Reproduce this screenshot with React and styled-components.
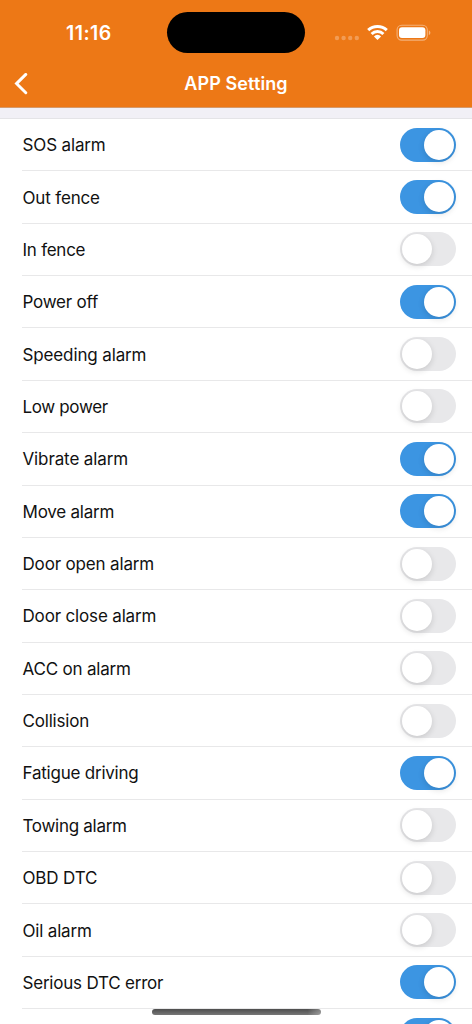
import React, { useState } from "react";
import styled, { createGlobalStyle } from "styled-components";

const GlobalStyle = createGlobalStyle`
  * { box-sizing: border-box; }
  body { margin: 0; background: #fff; }
`;

const Screen = styled.main`
  position: relative;
  width: 472px;
  height: 1024px;
  overflow: hidden;
  display: flex;
  flex-direction: column;
  background: #fff;
  color: #111;
  font-family: Inter, "Liberation Sans", sans-serif;
`;

const Header = styled.header`
  flex: none;
  height: 108px;
  background: #ed7816;
  border-bottom: 1px solid #d59a6c;
  color: #fff;
`;

const StatusBar = styled.div`
  height: 60px;
  display: grid;
  grid-template-columns: 167px 138px 1fr;
  align-items: center;
  padding-top: 5px;
`;

const Clock = styled.time`
  padding-left: 66px;
  font-size: 19.5px;
  line-height: 24px;
  font-weight: 600;
  letter-spacing: 0.45px;
`;

const Island = styled.div`
  height: 41px;
  border-radius: 21px;
  background: #000;
`;

const StatusIcons = styled.div`
  display: flex;
  align-items: center;
  padding-left: 29px;
`;

const NavBar = styled.nav`
  height: 47px;
  display: grid;
  grid-template-columns: 60px 1fr 60px;
  align-items: center;
`;

const BackButton = styled.button`
  display: flex;
  padding: 0 0 0 14px;
  border: 0;
  background: none;
  color: #fff;
`;

const Title = styled.h1`
  margin: 0;
  text-align: center;
  font-size: 18px;
  line-height: 24px;
  font-weight: 600;
  letter-spacing: 0.1px;
`;

const SectionGap = styled.div`
  flex: none;
  height: 11px;
  background: #f1f0f6;
  border-bottom: 1px solid #e4e4e7;
`;

const List = styled.ul`
  flex: none;
  margin: 0;
  padding: 0;
  list-style: none;
`;

const Row = styled.li`
  height: 52.36px;
  margin-left: 22px;
  padding-right: 16px;
  display: flex;
  align-items: center;
  justify-content: space-between;
  border-bottom: 1px solid #e8e8e9;
`;

const Label = styled.span`
  padding: 1px 0 0 0.5px;
  font-size: 17px;
  line-height: 24px;
  white-space: nowrap;
  letter-spacing: ${(p) => p.$tracking}px;
`;

const Switch = styled.button`
  width: 56px;
  height: 34px;
  padding: 2px;
  border: 0;
  border-radius: 17px;
  display: flex;
  justify-content: ${(p) => (p.$on ? "flex-end" : "flex-start")};
  background: ${(p) => (p.$on ? "#3c95e2" : "#e8e8ea")};
`;

const Knob = styled.span`
  width: 30px;
  height: 30px;
  border-radius: 50%;
  background: #fff;
  box-shadow: 0 2px 6px rgba(0, 0, 0, 0.14);
`;

const HomeIndicator = styled.div`
  position: absolute;
  left: 151.5px;
  top: 1009px;
  width: 169px;
  height: 6px;
  border-radius: 3px;
  background: linear-gradient(90deg, transparent 92%, rgba(255, 255, 255, 0.3)),
    linear-gradient(#4d4d4d, #777);
`;

const alarms = [
  ["SOS alarm", true, -0.14],
  ["Out fence", true, -0.16],
  ["In fence", false, -0.25],
  ["Power off", true, -0.22],
  ["Speeding alarm", false, -0.13],
  ["Low power", false, -0.35],
  ["Vibrate alarm", true, -0.12],
  ["Move alarm", true, -0.22],
  ["Door open alarm", false, -0.16],
  ["Door close alarm", false, -0.16],
  ["ACC on alarm", false, -0.19],
  ["Collision", false, -0.2],
  ["Fatigue driving", true, -0.22],
  ["Towing alarm", false, -0.28],
  ["OBD DTC", false, -0.15],
  ["Oil alarm", false, -0.18],
  ["Serious DTC error", true, -0.21],
  ["", true, 0],
];

function SettingRow({ name, initial, tracking }) {
  const [on, setOn] = useState(initial);
  return (
    <Row>
      <Label $tracking={tracking}>{name}</Label>
      <Switch $on={on} role="switch" aria-checked={on} onClick={() => setOn(!on)}>
        <Knob />
      </Switch>
    </Row>
  );
}

function StatusGlyphs() {
  return (
    <svg width="100" height="20" viewBox="334 22.6 100 20" fill="none">
      <g fill="#fff" fillOpacity="0.27">
        <circle cx="337" cy="37.6" r="2.2" />
        <circle cx="343.6" cy="37.6" r="2.2" />
        <circle cx="350.2" cy="37.6" r="2.2" />
        <circle cx="356.8" cy="37.6" r="2.2" />
      </g>
      <g stroke="#fff" strokeWidth="3">
        <path d="M368.2 29.8A13.4 13.4 0 0 1 386.8 29.8" />
        <path d="M371.6 33.6A8.5 8.5 0 0 1 383.4 33.6" />
      </g>
      <path d="M377.5 39.6L373.9 36A5 5 0 0 1 381.1 36Z" fill="#fff" />
      <rect x="397.1" y="24.8" width="30.2" height="14.9" rx="4.6" stroke="#fff" strokeOpacity="0.42" strokeWidth="1.1" />
      <rect x="399" y="26.8" width="26.4" height="10.8" rx="3" fill="#fff" />
      <path d="M428.8 30C430.9 30.7 430.9 33.8 428.8 34.5Z" fill="#fff" fillOpacity="0.45" />
    </svg>
  );
}

export default function App() {
  return (
    <Screen>
      <GlobalStyle />
      <Header>
        <StatusBar>
          <Clock>11:16</Clock>
          <Island />
          <StatusIcons>
            <StatusGlyphs />
          </StatusIcons>
        </StatusBar>
        <NavBar>
          <BackButton aria-label="Back">
            <svg width="14" height="22" viewBox="0 0 14 22" fill="none">
              <path d="M11.8 1.4L2.5 10.6L11.8 19.8" stroke="#fff" strokeWidth="2.9" strokeLinecap="round" strokeLinejoin="miter" />
            </svg>
          </BackButton>
          <Title>APP Setting</Title>
        </NavBar>
      </Header>
      <SectionGap />
      <List>
        {alarms.map(([name, on, tracking], i) => (
          <SettingRow key={i} name={name} initial={on} tracking={tracking} />
        ))}
      </List>
      <HomeIndicator />
    </Screen>
  );
}
